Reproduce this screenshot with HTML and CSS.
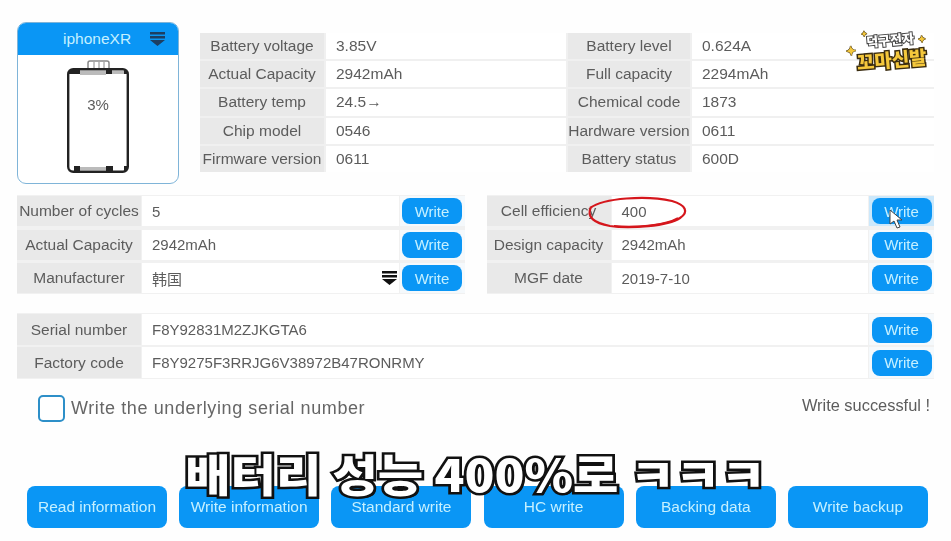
FILE: index.html
```html
<!DOCTYPE html>
<html lang="en">
<head>
  <meta charset="UTF-8" />
  <title>Battery tool</title>
  <link rel="stylesheet" href="styles.css">
</head>
<body>
  <svg class="defs" width="0" height="0">
    <symbol id="arrow" viewBox="0 0 15 14">
      <path d="M0 0h15v2.5H0zM0 4h15v2.5H0zM0 8h15l-7.5 6z" />
    </symbol>
  </svg>

  <div class="page">
    <div class="top">
      <div class="phone">
        <div class="phone-head">
          <span>iphoneXR</span>
          <svg class="arrow arrow-head"><use href="#arrow" /></svg>
        </div>
        <div class="phone-body">
          <svg class="battery" width="62" height="113" viewBox="0 0 62 113">
            <path d="M21 9V3q0-2 2-2h17q2 0 2 2v6" fill="#fff" stroke="#888" stroke-width="1.5" />
            <path d="M27 2v7M32 2v7M37 2v7" stroke="#888" />
            <rect x="1.2" y="9.2" width="59.6" height="102.6" rx="5" fill="#fff" stroke="#222" stroke-width="2.4" />
            <path d="M13 11h26v4H13zM45 11h12v3H45zM13 107h26v3H13z" fill="#bbb" />
            <path d="M2 10h11v4H2zM39 9h6v5h-6zM57 10h3v4h-3zM7 106h6v5H7zM39 106h7v5h-7zM57 106h3v5h-3z" fill="#222" />
          </svg>
          <span class="percent">3%</span>
        </div>
      </div>

      <div class="info">
        <div class="label">Battery voltage</div><div class="value">3.85V</div>
        <div class="label">Battery level</div><div class="value">0.624A</div>
        <div class="label">Actual Capacity</div><div class="value">2942mAh</div>
        <div class="label">Full capacity</div><div class="value">2294mAh</div>
        <div class="label">Battery temp</div><div class="value">24.5→</div>
        <div class="label">Chemical code</div><div class="value">1873</div>
        <div class="label">Chip model</div><div class="value">0546</div>
        <div class="label">Hardware version</div><div class="value">0611</div>
        <div class="label">Firmware version</div><div class="value">0611</div>
        <div class="label">Battery status</div><div class="value">600D</div>
      </div>
    </div>

    <div class="panels">
      <div class="fields">
        <div class="label">Number of cycles</div><div class="value">5</div>
        <div class="cell"><button class="btn-write">Write</button></div>
        <div class="label">Actual Capacity</div><div class="value">2942mAh</div>
        <div class="cell"><button class="btn-write">Write</button></div>
        <div class="label">Manufacturer</div>
        <div class="value value-select">
          <span class="cjk">韩国</span>
          <svg class="arrow"><use href="#arrow" /></svg>
        </div>
        <div class="cell"><button class="btn-write">Write</button></div>
      </div>

      <div class="fields">
        <div class="label">Cell efficiency</div><div class="value">400</div>
        <div class="cell cell-hover"><button class="btn-write">Write</button></div>
        <div class="label">Design capacity</div><div class="value">2942mAh</div>
        <div class="cell"><button class="btn-write">Write</button></div>
        <div class="label">MGF date</div><div class="value">2019-7-10</div>
        <div class="cell"><button class="btn-write">Write</button></div>
      </div>
    </div>

    <div class="fields serials">
      <div class="label">Serial number</div><div class="value">F8Y92831M2ZJKGTA6</div>
      <div class="cell"><button class="btn-write">Write</button></div>
      <div class="label">Factory code</div><div class="value">F8Y9275F3RRJG6V38972B47RONRMY</div>
      <div class="cell"><button class="btn-write">Write</button></div>
    </div>

    <div class="options">
      <label class="check"><span class="box"></span>Write the underlying serial number</label>
      <span class="status">Write successful !</span>
    </div>

    <div class="actions">
      <button class="btn-action">Read information</button>
      <button class="btn-action">Write information</button>
      <button class="btn-action">Standard write</button>
      <button class="btn-action">HC write</button>
      <button class="btn-action">Backing data</button>
      <button class="btn-action">Write backup</button>
    </div>

    <!-- video overlays -->
    <svg class="circle" width="106" height="36" viewBox="0 0 106 36">
      <path d="M6 13C20 3 62 0 88 6c14 4 17 11 8 17-12 8-50 11-70 8C10 28 2 22 7 12" fill="none" stroke="#d5161c" stroke-width="2.2" />
      <path d="M30 31c24 2 52-1 64-8" fill="none" stroke="#d5161c" stroke-width="2" />
    </svg>
    <svg class="cursor" width="15" height="20" viewBox="0 0 15 20">
      <path d="M1 1v14l4-3 3 7 3-1-3-7h5z" fill="#fff" stroke="#444" />
    </svg>
    <div class="sticker">
      <span class="star star-a">✦</span>
      <span class="star star-b">✦</span>
      <span class="star star-c">✦</span>
      <div class="sticker-top">덕구전자</div>
      <div class="sticker-main">꼬마신발</div>
    </div>
    <div class="caption">배터리 성능 400%로 ㅋㅋㅋ</div>
  </div>
</body>
</html>
```

FILE: styles.css
```css
body {
  margin: 0;
  background: #fefefe;
  color: #5c5c5c;
  font-family: 'Liberation Sans', sans-serif;
  font-size: 15.5px;
}

.defs { position: absolute; }

.page {
  position: relative;
  width: 951px;
  height: 541px;
  overflow: hidden;
  padding: 22px 17px 0;
  box-sizing: border-box;
  filter: blur(0.35px);
}

.top {
  display: flex;
  gap: 21px;
  height: 162px;
}

/* phone card */
.phone {
  width: 162px;
  box-sizing: border-box;
  border: 1px solid #7fb4d8;
  border-radius: 9px;
  overflow: hidden;
  background: #fff;
}

.phone-head {
  display: flex;
  align-items: center;
  justify-content: space-between;
  height: 32px;
  padding: 0 13px 0 45px;
  background: #0a96f5;
  color: #c5f0ff;
}

.arrow {
  width: 15px;
  height: 14px;
  fill: #111;
}

.arrow-head { fill: #1d3f63; }

.phone-body {
  position: relative;
  display: flex;
  justify-content: center;
  padding-top: 5px;
}

.percent {
  position: absolute;
  top: 41px;
  left: 0;
  right: 0;
  text-align: center;
  font-size: 15px;
}

/* tables */
.info {
  display: grid;
  grid-template-columns: 124px 240px 122px 242px;
  grid-auto-rows: 1fr;
  gap: 2px;
  width: 734px;
  height: 139px;
  margin-top: 11px;
  background: #f0f0f0;
}

.label {
  display: flex;
  align-items: center;
  justify-content: center;
  background: #e9e9e9;
  white-space: nowrap;
}

.value {
  display: flex;
  align-items: center;
  padding-left: 10px;
  background: #fff;
}

.panels {
  display: flex;
  gap: 22px;
  margin-top: 11px;
}

.fields {
  flex: 1;
  display: grid;
  grid-template-columns: 124px 1fr 65px;
  grid-auto-rows: 30px;
  gap: 3.5px 1px;
  background: #f1f1f1;
  padding: 1px 0;
}

.fields .value { font-size: 15px; }

.value-select {
  justify-content: space-between;
  padding-right: 2px;
}

.cjk { font-family: 'Noto Sans CJK SC', sans-serif; }

.cell {
  display: flex;
  align-items: center;
  justify-content: center;
  background: #f5f9fc;
}

.cell-hover { background: #cce8fb; }

.btn-write {
  width: 60px;
  height: 26px;
  padding: 0;
  border: 0;
  border-radius: 8px;
  background: #0a96f5;
  color: #c5f0ff;
  font: inherit;
  font-size: 15px;
}

.serials {
  margin-top: 19px;
  grid-auto-rows: 31px;
  gap: 2px 1px;
}

.options {
  display: flex;
  justify-content: space-between;
  align-items: flex-start;
  margin-top: 16px;
  padding: 0 4px 0 21px;
}

.check {
  display: flex;
  align-items: center;
  gap: 6px;
  font-size: 18px;
  letter-spacing: .6px;
  color: #666;
}

.box {
  width: 23px;
  height: 23px;
  border: 2px solid #2d8fc8;
  border-radius: 5px;
  background: #fff;
}

.status {
  margin-top: 1px;
  font-size: 16.4px;
}

.actions {
  display: flex;
  gap: 12.2px;
  margin-top: 64px;
  padding-left: 10px;
}

.btn-action {
  width: 140px;
  height: 42px;
  padding: 0;
  border: 0;
  border-radius: 8px;
  background: #0a96f5;
  color: #c5f0ff;
  font: inherit;
}

/* video overlays */
.circle {
  position: absolute;
  left: 584px;
  top: 195px;
}

.cursor {
  position: absolute;
  left: 889px;
  top: 209px;
}

.caption {
  position: absolute;
  left: 0;
  right: 0;
  top: 442px;
  text-align: center;
  font-family: 'Noto Sans CJK KR', sans-serif;
  font-weight: 900;
  font-size: 44px;
  line-height: 62px;
  white-space: nowrap;
  color: #fff;
  -webkit-text-stroke: 5px #111;
  paint-order: stroke fill;
  text-shadow: 2px 2px 0 #111;
  transform: scaleX(1.12);
}

.sticker {
  position: absolute;
  left: 854px;
  top: 32px;
  width: 74px;
  transform: rotate(-5deg);
  text-align: center;
  font-family: 'Noto Sans CJK KR', sans-serif;
  font-weight: 900;
}

.sticker-top {
  font-size: 13px;
  line-height: 16px;
  color: #fff;
  -webkit-text-stroke: 2px #444;
  paint-order: stroke fill;
}

.sticker-main {
  font-size: 19px;
  line-height: 22px;
  color: #f5c83c;
  -webkit-text-stroke: 3px #3a2c10;
  paint-order: stroke fill;
}

.star {
  position: absolute;
  color: #f5c83c;
  -webkit-text-stroke: 1px #3a2c10;
  paint-order: stroke fill;
  line-height: 1;
}

.star-a { left: -8px; top: 8px; font-size: 13px; }
.star-b { left: 8px; top: -5px; font-size: 8px; }
.star-c { left: 65px; top: 4px; font-size: 10px; }
```
